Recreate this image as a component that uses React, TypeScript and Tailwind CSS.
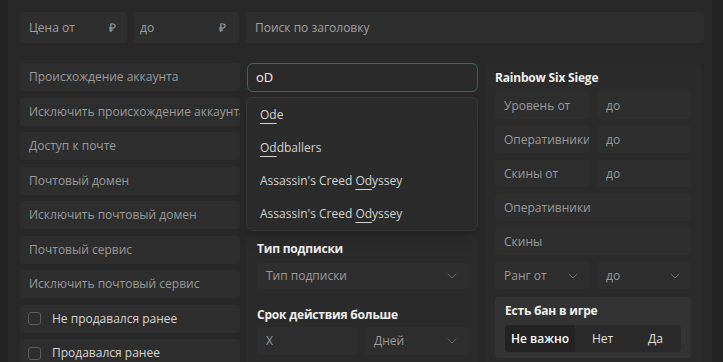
import { ChevronDown } from 'lucide-react';

const fieldBase =
  "flex items-center overflow-hidden whitespace-nowrap rounded-[3px] bg-[#2e2e2e] text-[#9a9a9a]";

function Field({ label, className = "h-[28px]" }: { label: string; className?: string }) {
  return <div className={`${fieldBase} px-[9px] ${className}`}>{label}</div>;
}

function SelectField({ label, className = "" }: { label: string; className?: string }) {
  return (
    <div className={`${fieldBase} justify-between pl-[9px] pr-[8px] ${className}`}>
      <span>{label}</span>
      <ChevronDown size={16} strokeWidth={1.5} className="text-[#6f6f6f]" />
    </div>
  );
}

function CheckRow({ label }: { label: string }) {
  return (
    <div className={`${fieldBase} h-[28px] gap-[11px] pl-[8px] text-[#d6d6d6]`}>
      <span className="h-[13px] w-[13px] shrink-0 rounded-[3px] border border-[#5c5c5c]" />
      <span>{label}</span>
    </div>
  );
}

function Match({ pre = "", hit, post = "" }: { pre?: string; hit: string; post?: string }) {
  return (
    <div className="flex h-[33px] items-center px-[13px] text-[#d4d4d4]">
      <span>
        {pre}
        <span className="underline decoration-[#d4d4d4] underline-offset-[4px]">{hit}</span>
        {post}
      </span>
    </div>
  );
}

const leftFields = [
  "Происхождение аккаунта",
  "Исключить происхождение аккаунта",
  "Доступ к почте",
  "Почтовый домен",
  "Исключить почтовый домен",
  "Почтовый сервис",
  "Исключить почтовый сервис",
];

const heading = "font-bold leading-4 tracking-[-0.2px] text-[#f0f0f0]";

export default function App() {
  return (
    <div className="h-[362px] w-[723px] overflow-hidden bg-[#242424] text-[12px] font-['Open_Sans',sans-serif]">
      <div className="ml-2 h-full w-[704px] bg-[#282828] pl-3 pr-2 pt-3">
        {/* price + search */}
        <div className="flex gap-[7px]">
          <div className={`${fieldBase} h-[31px] w-[107px] justify-between pl-[9px] pr-[11px] text-[#a0a0a0]`}>
            <span>Цена от</span>
            <span>₽</span>
          </div>
          <div className={`${fieldBase} h-[31px] w-[105px] justify-between pl-[6px] pr-[13px] text-[#a0a0a0]`}>
            <span>до</span>
            <span>₽</span>
          </div>
          <div className={`${fieldBase} h-[31px] flex-1 px-[9px] text-[#a0a0a0]`}>Поиск по заголовку</div>
        </div>

        <div className="mt-[20px] flex gap-[7px]">
          {/* left column */}
          <div className="flex w-[220px] flex-col gap-[6.5px]">
            {leftFields.map((f) => (
              <Field key={f} label={f} />
            ))}
            <CheckRow label="Не продавался ранее" />
            <CheckRow label="Продавался ранее" />
          </div>

          {/* middle column */}
          <div className="w-[231px]">
            <div className="relative">
              <div className="flex h-[29px] items-center rounded-[6px] border border-[#2f6f55] bg-[#2a2a2a] px-[8px] text-[13px] text-[#f2f2f2]">
                oD
              </div>
              <div className="absolute left-[-1px] top-[34px] z-10 w-[232px] rounded-[6px] border border-[#363636] bg-[#2b2b2b] shadow-lg">
                <Match hit="Od" post="e" />
                <Match hit="Od" post="dballers" />
                <Match pre="Assassin's Creed " hit="Od" post="yssey" />
                <Match pre="Assassin's Creed " hit="Od" post="yssey" />
              </div>
            </div>
            <div className="mt-[143px] rounded-[4px] bg-[#2b2b2b] px-[10px] pb-[10px] pt-[6px]">
              <div className={heading}>Тип подписки</div>
              <SelectField label="Тип подписки" className="mt-[6px] h-[26px]" />
              <div className={`mt-[18px] ${heading}`}>Срок действия больше</div>
              <div className="mt-[4px] flex gap-[8px]">
                <Field label="X" className="h-[28px] w-[100px]" />
                <SelectField label="Дней" className="h-[28px] flex-1" />
              </div>
            </div>
          </div>

          {/* right column */}
          <div className="mt-[1px] w-[216px] self-start rounded-[4px] bg-[#2b2b2b] px-[10px] pt-[6px] pb-[10px]">
            <div className={heading}>Rainbow Six Siege</div>
            <div className="mt-[6px] flex flex-col gap-[7px]">
              <div className="grid grid-cols-2 gap-[8px]">
                <Field label="Уровень от" className="h-[27px]" />
                <Field label="до" className="h-[27px]" />
              </div>
              <div className="grid grid-cols-2 gap-[8px]">
                <Field label="Оперативники от" className="h-[27px]" />
                <Field label="до" className="h-[27px]" />
              </div>
              <div className="grid grid-cols-2 gap-[8px]">
                <Field label="Скины от" className="h-[27px]" />
                <Field label="до" className="h-[27px]" />
              </div>
              <Field label="Оперативники" className="h-[27px]" />
              <Field label="Скины" className="h-[27px]" />
              <div className="grid grid-cols-2 gap-[8px]">
                <SelectField label="Ранг от" className="h-[27px]" />
                <SelectField label="до" className="h-[27px]" />
              </div>
            </div>
            <div className="mt-[8px] rounded-[4px] bg-[#333333] px-[10px] pt-[6px] pb-[6px]">
              <div className={heading}>Есть бан в игре</div>
              <div className="mt-[6px] flex h-[27px] overflow-hidden rounded-[4px] bg-[#2a2a2a] text-[#e0e0e0]">
                <div className="flex w-[70px] items-center justify-center bg-[#232323] font-semibold text-white">
                  Не важно
                </div>
                <div className="flex w-[55px] items-center justify-center">Нет</div>
                <div className="flex flex-1 items-center justify-center">Да</div>
              </div>
            </div>
          </div>
        </div>
      </div>
    </div>
  );
}
